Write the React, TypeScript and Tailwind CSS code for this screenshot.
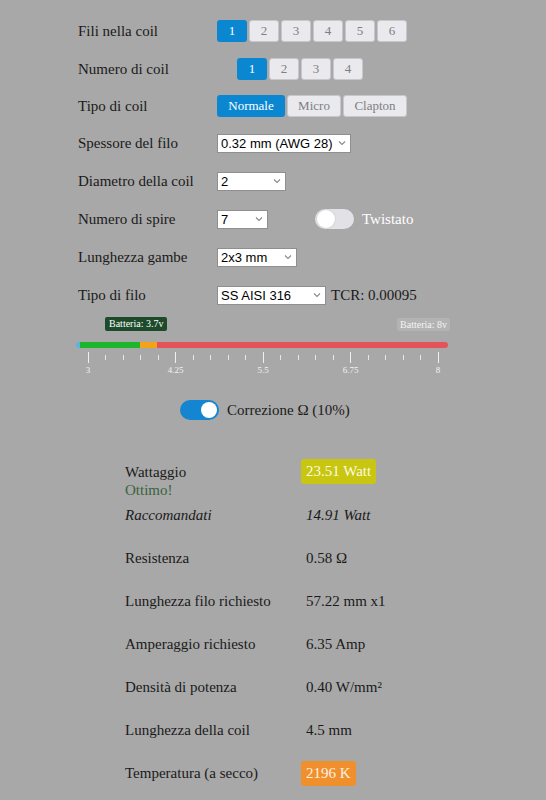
import React from "react";

const serif = { fontFamily: '"Liberation Serif", "Times New Roman", serif' };
const sans = { fontFamily: '"Liberation Sans", Arial, sans-serif' };

function Chevron() {
  return (
    <svg width="8" height="6" viewBox="0 0 8 6" className="ml-auto shrink-0">
      <path d="M1 1.5 L4 4.5 L7 1.5" fill="none" stroke="#8a8a8a" strokeWidth="1.1" />
    </svg>
  );
}

function Select({ value, width }: { value: string; width: string }) {
  return (
    <div
      className={`flex h-[19px] items-center whitespace-nowrap border border-[#8f8f8f] bg-white pl-[3px] pr-[4px] text-[13px] leading-none text-black ${width}`}
      style={sans}
    >
      <span className="mr-[3px]">{value}</span>
      <Chevron />
    </div>
  );
}

function SegButtons({ items, active, widths }: { items: string[]; active: number; widths?: string[] }) {
  return (
    <div className="flex gap-[2px]">
      {items.map((it, i) => (
        <div
          key={it}
          className={`flex h-[22px] items-center justify-center rounded-[3px] text-[13px] ${
            widths ? widths[i] : "w-[30px]"
          } ${i === active ? "bg-[#0b87d2] text-white" : "border border-[#c8c8cc] bg-[#e9e9ee] text-[#808080]"}`}
        >
          {it}
        </div>
      ))}
    </div>
  );
}

function Row({ label, h, children }: { label: string; h: string; children: React.ReactNode }) {
  return (
    <div className={`flex items-center ${h}`}>
      <div className="w-[139px] shrink-0 text-[15px] text-[#1a1a1a]">{label}</div>
      {children}
    </div>
  );
}

function Slider() {
  const ticks = Array.from({ length: 21 }, (_, i) => i);
  const labels = ["3", "4.25", "5.5", "6.75", "8"];
  return (
    <div className="relative ml-[76px] h-[62px] w-[374px]">
      <div className="absolute left-[29px] top-[2px] rounded-[2px] bg-[#1e4a2c] px-[4px] py-[1px] text-[10px] leading-[12px] text-white">
        Batteria: 3.7v
      </div>
      <div className="absolute right-[0px] top-[3px] rounded-[2px] bg-[#b3b3b3] px-[3px] py-[1px] text-[10px] leading-[11px] text-[#f4f4f4]">
        Batteria: 8v
      </div>
      <div className="absolute left-0 top-[27px] flex h-[6px] w-[372px] overflow-hidden rounded-full">
        <div className="w-[4px] bg-[#5ab3e0]" />
        <div className="w-[60px] bg-[#1db52a]" />
        <div className="w-[17px] bg-[#f2a316]" />
        <div className="flex-1 bg-[#e5535a]" />
      </div>
      <div className="absolute left-[12px] top-[37px] flex w-[350px] justify-between">
        {ticks.map((t) => (
          <div key={t} className="flex w-0 flex-col items-center">
            <div className={t % 5 === 0 ? "h-[11px] w-px bg-[#f0f0f0]" : "mt-[3px] h-[5px] w-px bg-[#e6e6e6]"} />
            {t % 5 === 0 && (
              <div className="mt-[2px] whitespace-nowrap text-[9px] leading-[10px] text-[#f2f2f2]">
                {labels[t / 5]}
              </div>
            )}
          </div>
        ))}
      </div>
    </div>
  );
}

function ResultRow({ label, children }: { label: React.ReactNode; children: React.ReactNode }) {
  return (
    <div className="flex h-[43px] items-center text-[15px] text-[#1a1a1a]">
      <div className="w-[181px] shrink-0">{label}</div>
      <div>{children}</div>
    </div>
  );
}

export default function App() {
  return (
    <div className="min-h-[800px] w-[546px] bg-[#a8a8a8]" style={serif}>
      <div className="pl-[78px] pt-[12px]">
        <Row label="Fili nella coil" h="h-[38px]">
          <SegButtons items={["1", "2", "3", "4", "5", "6"]} active={0} />
        </Row>
        <Row label="Numero di coil" h="h-[38px]">
          <div className="ml-[20px]">
            <SegButtons items={["1", "2", "3", "4"]} active={0} />
          </div>
        </Row>
        <Row label="Tipo di coil" h="h-[36px]">
          <SegButtons
            items={["Normale", "Micro", "Clapton"]}
            active={0}
            widths={["w-[68px]", "w-[54px]", "w-[64px]"]}
          />
        </Row>
        <Row label="Spessore del filo" h="h-[38px]">
          <Select value="0.32 mm (AWG 28)" width="w-[134px]" />
        </Row>
        <Row label="Diametro della coil" h="h-[38px]">
          <Select value="2" width="w-[69px]" />
        </Row>
        <Row label="Numero di spire" h="h-[38px]">
          <Select value="7" width="w-[51px]" />
          <div className="ml-[47px] flex h-[20px] w-[39px] items-center rounded-full bg-[#e2e2e6] p-[2px]">
            <div className="h-[18px] w-[18px] rounded-full bg-white shadow-[0_0_2px_rgba(0,0,0,0.15)]" />
          </div>
          <span className="ml-[8px] text-[15px] text-white">Twistato</span>
        </Row>
        <Row label="Lunghezza gambe" h="h-[38px]">
          <Select value="2x3 mm" width="w-[80px]" />
        </Row>
        <Row label="Tipo di filo" h="h-[38px]">
          <Select value="SS AISI 316" width="w-[109px]" />
          <span className="ml-[5px] text-[15px] text-[#1a1a1a]">TCR: 0.00095</span>
        </Row>
      </div>

      <div className="pt-[1px]">
        <Slider />
      </div>

      <div className="mt-[22px] flex items-center pl-[180px]">
        <div className="flex h-[20px] w-[39px] items-center justify-end rounded-full bg-[#1485d0] p-[2px]">
          <div className="h-[16px] w-[16px] rounded-full bg-white" />
        </div>
        <span className="ml-[8px] text-[15px] text-[#1a1a1a]">Correzione Ω (10%)</span>
      </div>

      <div className="mt-[37px] pl-[125px]">
        <div className="flex text-[15px] text-[#1a1a1a]">
          <div className="w-[176px] shrink-0 pt-[4px] leading-[18px]">
            <div>Wattaggio</div>
            <div className="text-[#3a623b]">Ottimo!</div>
          </div>
          <div>
            <span className="inline-block rounded-[3px] bg-[#c8c610] px-[5px] py-[3px] leading-[19px] text-[#fbfbe0]">
              23.51 Watt
            </span>
          </div>
        </div>
        <div className="flex h-[34px] items-center text-[15px] italic text-[#1a1a1a]">
          <div className="w-[181px] shrink-0">Raccomandati</div>
          <div>14.91 Watt</div>
        </div>
        <div className="mt-[4px]">
          <ResultRow label="Resistenza">0.58 Ω</ResultRow>
          <ResultRow label="Lunghezza filo richiesto">57.22 mm x1</ResultRow>
          <ResultRow label="Amperaggio richiesto">6.35 Amp</ResultRow>
          <ResultRow label="Densità di potenza">0.40 W/mm²</ResultRow>
          <ResultRow label="Lunghezza della coil">4.5 mm</ResultRow>
          <div className="flex h-[43px] items-center text-[15px] text-[#1a1a1a]">
            <div className="w-[176px] shrink-0">Temperatura (a secco)</div>
            <span className="inline-block rounded-[3px] bg-[#f0902c] px-[5px] py-[3px] leading-[19px] text-[#fdf0e0]">
              2196 K
            </span>
          </div>
        </div>
      </div>
    </div>
  );
}
